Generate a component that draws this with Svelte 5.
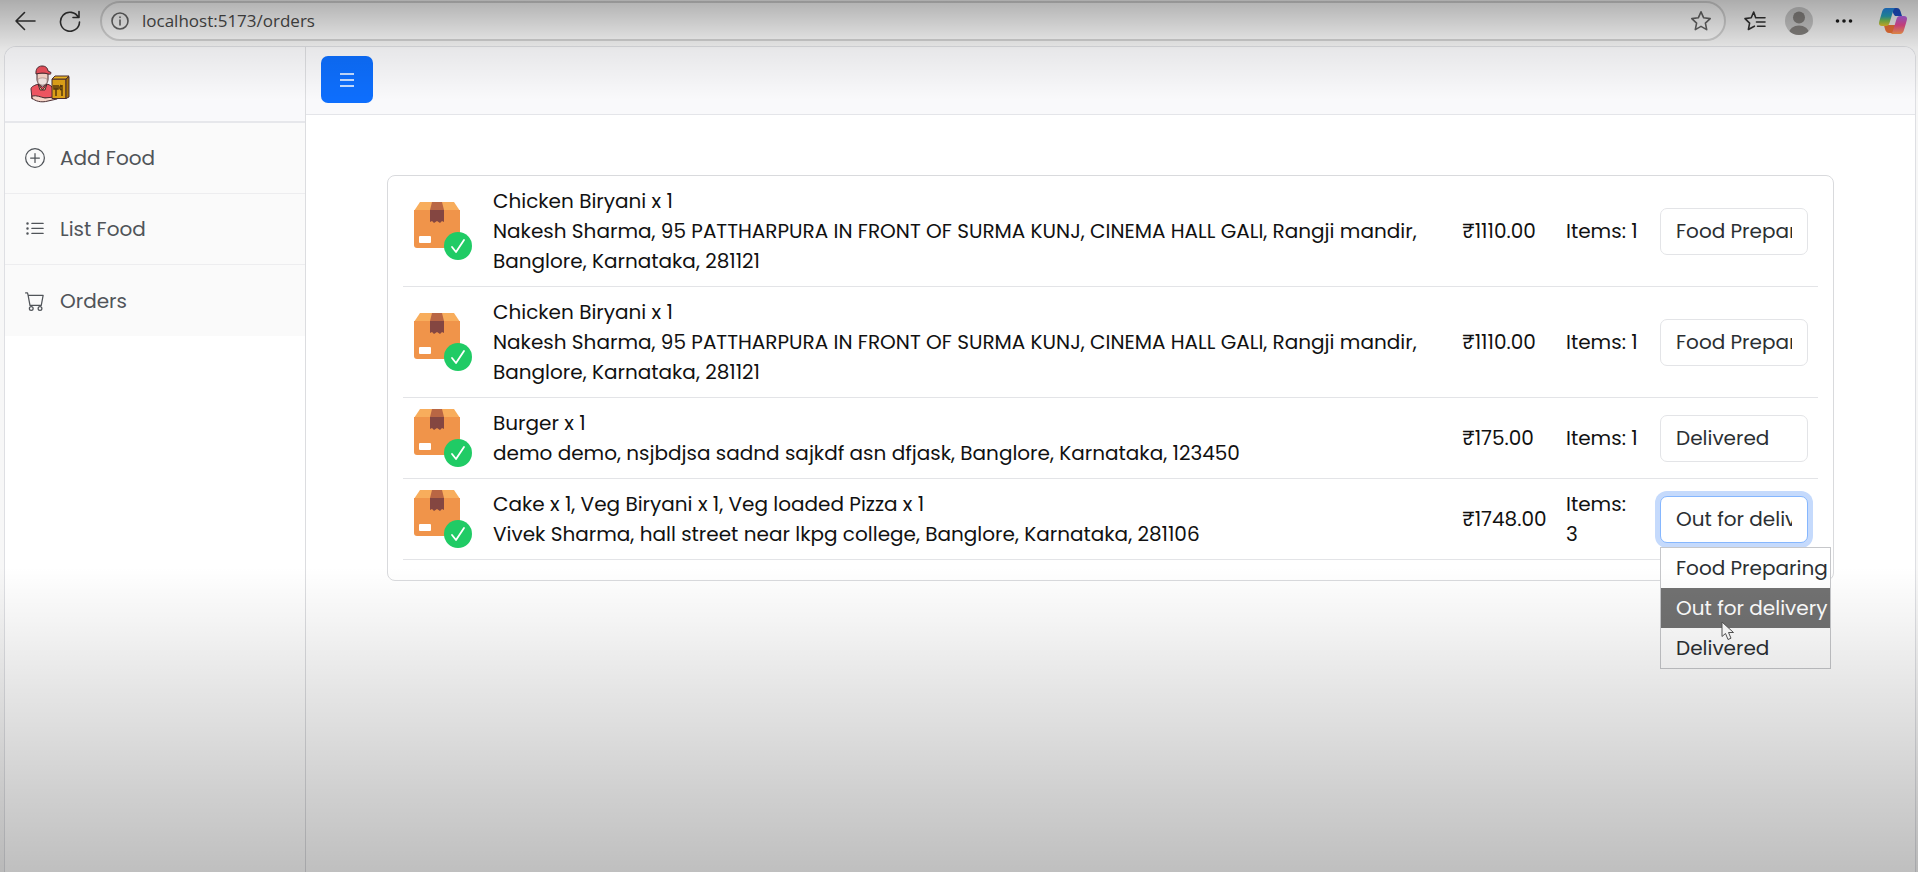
<script>
  const statuses = ['Food Preparing', 'Out for delivery', 'Delivered'];

  const links = [
    { label: 'Add Food', icon: 'add' },
    { label: 'List Food', icon: 'list' },
    { label: 'Orders', icon: 'cart' }
  ];

  const longAddress =
    'Nakesh Sharma, 95 PATTHARPURA IN FRONT OF SURMA KUNJ, CINEMA HALL GALI, Rangji mandir, Banglore, Karnataka, 281121';

  let orders = $state([
    { items: 'Chicken Biryani x 1', address: longAddress, amount: '1110.00', count: 1, status: 'Food Preparing' },
    { items: 'Chicken Biryani x 1', address: longAddress, amount: '1110.00', count: 1, status: 'Food Preparing' },
    {
      items: 'Burger x 1',
      address: 'demo demo, nsjbdjsa sadnd sajkdf asn dfjask, Banglore, Karnataka, 123450',
      amount: '175.00',
      count: 1,
      status: 'Delivered'
    },
    {
      items: 'Cake x 1, Veg Biryani x 1, Veg loaded Pizza x 1',
      address: 'Vivek Sharma, hall street near lkpg college, Banglore, Karnataka, 281106',
      amount: '1748.00',
      count: 3,
      status: 'Out for delivery'
    }
  ]);

  let openRow = $state(3);

  function choose(index, status) {
    orders[index].status = status;
    openRow = -1;
  }
</script>

<div class="window">
  <header class="toolbar">
    <button class="tool back" aria-label="Back">
      <svg width="22" height="20" viewBox="0 0 22 20"><path d="M21 10H2M10.500 1.500 2 10l8.500 8.500" /></svg>
    </button>
    <button class="tool reload" aria-label="Reload">
      <svg width="22" height="22" viewBox="0 0 22 22"><path d="M19.500 7.500A9.500 9.500 0 1 0 20.500 12M20 1.500v6h-6" /></svg>
    </button>
    <div class="address">
      <svg class="info" width="18" height="18" viewBox="0 0 18 18"><circle cx="9" cy="9" r="8" /><path d="M9 8v5M9 5v.5" /></svg>
      <input aria-label="Address" value="localhost:5173/orders" />
      <button class="tool star" aria-label="Add to favourites">
        <svg width="22" height="22" viewBox="0 0 22 22"><path d="m11 1.800 2.700 6 6.500.8-4.800 4.500 1.300 6.500-5.700-3.200-5.700 3.200 1.300-6.500L1.800 8.600l6.500-.8Z" /></svg>
      </button>
    </div>
    <button class="tool favs" aria-label="Favourites">
      <svg width="22" height="22" viewBox="0 0 22 22"><path d="M13 7.800h-1.300L9.700 2 7.200 7.800l-6.200.8 4.600 4.500-1.200 6.400 5-2.800 1-.5M13.500 7.800H21M12.500 12H21M13.500 16.200H21" /></svg>
    </button>
    <button class="tool profile" aria-label="Profile">
      <svg width="28" height="28" viewBox="0 0 28 28">
        <defs><clipPath id="face"><circle cx="14" cy="14" r="14" /></clipPath></defs>
        <circle cx="14" cy="14" r="14" fill="#c9c9c9" stroke="none" />
        <g clip-path="url(#face)" fill="#85827f" stroke="none"><circle cx="14" cy="10.500" r="6" /><ellipse cx="14" cy="26" rx="10" ry="7.500" /></g>
      </svg>
    </button>
    <button class="tool more" aria-label="More">
      <svg width="18" height="6" viewBox="0 0 18 6"><g fill="#1c1c1c" stroke="none"><circle cx="2.500" cy="3" r="1.800" /><circle cx="9" cy="3" r="1.800" /><circle cx="15.500" cy="3" r="1.800" /></g></svg>
    </button>
    <button class="tool copilot" aria-label="Copilot">
      <svg width="28" height="26" viewBox="0 0 28 26">
        <defs>
          <linearGradient id="cool" x1="0" y1="0" x2="0" y2="1"><stop offset="0" stop-color="#2687ee" /><stop offset=".45" stop-color="#28a5bc" /><stop offset=".7" stop-color="#80c552" /><stop offset="1" stop-color="#edc72c" /></linearGradient>
          <linearGradient id="warm" x1="0" y1="0" x2="0" y2="1"><stop offset="0" stop-color="#b568ee" /><stop offset=".5" stop-color="#ee4b96" /><stop offset="1" stop-color="#ff9d50" /></linearGradient>
        </defs>
        <g stroke="none">
          <path fill="#1e50c8" d="M14 0h4c3 0 3.500 3 5 8h-7c-2-2-3-5-2-8Z" />
          <path fill="#f07338" d="M5 17c1 5 2 8 5 8h4l3-8Z" />
          <path fill="url(#cool)" d="M7 0h10c-2 0-2.600 2-3.500 5l-3 10c-.7 2-1.500 3-3.500 3H3c-3 0-3.500-2-2.600-5L3 4C3.800 1.500 5 0 7 0Z" />
          <path fill="url(#warm)" d="M21 26H11c2 0 2.600-2 3.500-5l3-10c.7-2 1.500-3 3.500-3h4c3 0 3.500 2 2.600 5L25 22c-.8 2.500-2 4-4 4Z" />
        </g>
      </svg>
    </button>
  </header>

  <div class="page">
    <aside class="sidebar">
      <div class="brand">
        <svg width="40" height="38" viewBox="0 0 40 38" role="img" aria-label="Food delivery">
          <g stroke="#4a2d31" stroke-width="1" stroke-linejoin="round">
            <path fill="#f6d5c8" d="M7 8v6c0 4 2.500 6 5.500 6s5.500-2 5.500-6V8Z" />
            <path fill="#f3e6e2" stroke="#ad8f89" stroke-width=".7" d="M8 14c2-1.500 7-1.500 9 0v3c-1 4-8 4-9 0Z" />
            <path fill="#e94f5b" d="M6 9c-.5-5 2-8 6-8s5.500 2 6 5l3 1.500c.5 1.500-1 2-3 1.500-4-1.500-8-1-12 0Z" />
            <path fill="#ef5661" d="M1 24c0-2 2-3 7-5l4.500 3 4.500-3c3 1 5 2 6 5v9H5l-3 1Z" />
            <path fill="#f4d091" d="m8 19 4.500 6 4.500-6-2 6h-5Z" />
            <path fill="#f6d5c8" d="M2 31c5-1 8 1 13 2l9-1c3 0 5 1 3 2l-9 2c-7 2-13 0-16-3Z" />
            <path fill="#dda018" d="M22 14h14v19.500H22Z" />
            <path fill="#a87508" d="m36 14 3-2.500V32l-3 1.500Z" />
            <path fill="#f0b822" d="m22 14 3-3h14l-3 3Z" />
          </g>
          <path d="M26 20v11M24 20v4h4v-4M32 20v11M31 20c-2 3-1 5 1 5" fill="none" stroke="#59390b" stroke-width="1.500" />
        </svg>
      </div>
      <nav class="links">
        {#each links as link}
          <a href="#{link.icon}">
            <svg width="20" height="20" viewBox="0 0 16 16" fill="currentColor">
              {#if link.icon === 'add'}
                <path d="M8 15A7 7 0 1 1 8 1a7 7 0 0 1 0 14m0 1A8 8 0 1 0 8 0a8 8 0 0 0 0 16" />
                <path d="M8 4a.5.5 0 0 1 .5.5v3h3a.5.5 0 0 1 0 1h-3v3a.5.5 0 0 1-1 0v-3h-3a.5.5 0 0 1 0-1h3v-3A.5.5 0 0 1 8 4" />
              {:else if link.icon === 'list'}
                <path fill-rule="evenodd" d="M5 11.500a.5.5 0 0 1 .5-.5h9a.5.5 0 0 1 0 1h-9a.5.5 0 0 1-.5-.5m0-4a.5.5 0 0 1 .5-.5h9a.5.5 0 0 1 0 1h-9a.5.5 0 0 1-.5-.5m0-4a.5.5 0 0 1 .5-.5h9a.5.5 0 0 1 0 1h-9a.5.5 0 0 1-.5-.5m-3 1a1 1 0 1 0 0-2 1 1 0 0 0 0 2m0 4a1 1 0 1 0 0-2 1 1 0 0 0 0 2m0 4a1 1 0 1 0 0-2 1 1 0 0 0 0 2" />
              {:else}
                <path d="M.5 1a.5.5 0 0 0 0 1h1.110l.4 1.607 1.480 7.985A.5.5 0 0 0 4 12h1a2 2 0 1 0 0 4 2 2 0 0 0 0-4h7a2 2 0 1 0 0 4 2 2 0 0 0 0-4h1a.5.5 0 0 0 .49-.408l1.500-8A.5.5 0 0 0 14.500 3H2.890l-.405-1.621A.5.5 0 0 0 2 1zm2.600 3h10.800l-1.300 7H4.400zM5 13a1 1 0 1 1 0 2 1 1 0 0 1 0-2m7 0a1 1 0 1 1 0 2 1 1 0 0 1 0-2" />
              {/if}
            </svg>
            {link.label}
          </a>
        {/each}
      </nav>
    </aside>

    <div class="content">
      <div class="topbar">
        <button class="menu" aria-label="Toggle menu">
          <svg width="16" height="16" viewBox="0 0 16 16"><path d="M1 2h14M1 8h14M1 14h14" /></svg>
        </button>
      </div>

      <main>
        <section class="card">
          <table>
            <colgroup><col class="c-icon" /><col /><col class="c-amount" /><col class="c-count" /><col class="c-status" /></colgroup>
            <tbody>
              {#each orders as order, index}
                <tr>
                  <td>
                    <svg class="parcel" width="60" height="60" viewBox="0 0 60 60" aria-hidden="true">
                      <path fill="#f8ad5c" d="M7 1h34l6 9H1Z" />
                      <path fill="#f0944a" d="M1 9h46v35a3 3 0 0 1-3 3H4a3 3 0 0 1-3-3Z" />
                      <path fill="#b96644" d="M19 1h10l2 8H17Z" />
                      <path fill="#844641" d="M17 9h14v12l-2-1-2 2-3-2-3 2-2-2-2 1Z" />
                      <rect x="6" y="35" width="12" height="7" rx="1" fill="#fff" />
                      <circle cx="45" cy="45" r="14" fill="#20cb65" />
                      <path d="m39 46 4 5 8-12" fill="none" stroke="#fff" stroke-width="1.800" stroke-linecap="round" stroke-linejoin="round" />
                    </svg>
                  </td>
                  <td>
                    <div>{order.items}</div>
                    <div>{order.address}</div>
                  </td>
                  <td class="amount">₹{order.amount}</td>
                  <td class="count" class:narrow={order.count > 1}>Items: <span>{order.count}</span></td>
                  <td>
                    <div class="status">
                      <select class:open={openRow === index} bind:value={order.status} aria-label="Status of order {index + 1}">
                        {#each statuses as status}<option>{status}</option>{/each}
                      </select>
                      {#if openRow === index}
                        <div class="options" role="listbox" aria-label="Order status">
                          {#each statuses as status}
                            <button role="option" aria-selected={status === order.status} onclick={() => choose(index, status)}>{status}</button>
                          {/each}
                          <svg class="pointer" width="14" height="20" viewBox="0 0 14 20" aria-hidden="true"><path d="M1 1v14.500l3.500-3 2.500 6 3-1.300-2.500-5.700h5Z" /></svg>
                        </div>
                      {/if}
                    </div>
                  </td>
                </tr>
              {/each}
            </tbody>
          </table>
        </section>
      </main>
    </div>
  </div>
  <div class="shade"></div>
</div>

<style>
  :global(body) {
    margin: 0;
  }
  .window,
  .window :global(*) {
    box-sizing: border-box;
  }
  .window {
    position: relative;
    display: flex;
    flex-direction: column;
    min-height: 100vh;
    background: #f7f7f7;
    color: #111;
    font: 20px/30px Poppins, Inter, sans-serif;
  }
  .shade {
    position: absolute;
    inset: 0;
    pointer-events: none;
    z-index: 5;
    background:
      linear-gradient(rgba(0, 0, 0, 0.3), rgba(0, 0, 0, 0.07) 50px, transparent 100px),
      linear-gradient(transparent 65%, rgba(0, 0, 0, 0.25));
  }
  button {
    font: inherit;
    border: 0;
    padding: 0;
    background: none;
  }

  .toolbar {
    display: flex;
    align-items: center;
    height: 42px;
    padding: 0 11px 0 14px;
  }
  .tool {
    display: flex;
    flex: none;
  }
  .tool svg,
  .info {
    fill: none;
    stroke: #333;
    stroke-width: 1.6;
    stroke-linecap: round;
    stroke-linejoin: round;
  }
  .reload {
    margin-left: 23px;
  }
  .address {
    flex: 1;
    display: flex;
    align-items: center;
    height: 40px;
    margin: 0 18px 0 19px;
    padding: 0 12px 0 9px;
    border: 2px solid #d4d4d4;
    border-radius: 20px;
    background: #fdfdfd;
  }
  .address .info,
  .star svg {
    stroke: #666;
  }
  .address input {
    flex: 1;
    min-width: 0;
    margin: 0 0 0 13px;
    padding: 0;
    border: 0;
    outline: 0;
    background: none;
    color: #4a4a4a;
    font: 17px/24px 'Segoe UI', 'Open Sans', sans-serif;
  }
  .profile {
    margin-left: 19px;
  }
  .more {
    margin-left: 22px;
  }
  .copilot {
    margin-left: 26px;
  }

  .page {
    flex: 1;
    display: flex;
    margin: 4px 2px 0 4px;
    border: 1px solid #dedfe3;
    border-bottom: 0;
    border-radius: 12px 12px 0 0;
    background: #fff;
    overflow: hidden;
  }
  .sidebar {
    flex: none;
    width: 301px;
    border-right: 1px solid #dcdde0;
  }
  .brand {
    display: flex;
    align-items: center;
    height: 76px;
    padding-left: 25px;
    border-bottom: 2px solid #e6e7eb;
    background: #f9f9fb;
  }
  .links a {
    display: flex;
    align-items: center;
    gap: 15px;
    height: 71px;
    padding-left: 20px;
    border-bottom: 1px solid #ededef;
    background: #fafafa;
    color: #505459;
    text-decoration: none;
  }
  .links a:last-child {
    border-bottom: 0;
  }
  .content {
    flex: 1;
    min-width: 0;
  }
  .topbar {
    display: flex;
    align-items: center;
    height: 68px;
    padding: 0 15px 2px;
    border-bottom: 1px solid #e4e5e9;
    background: #f9f9fb;
  }
  .menu {
    display: flex;
    align-items: center;
    justify-content: center;
    width: 52px;
    height: 47px;
    border-radius: 7px;
    background: #0d6efd;
  }
  .menu path {
    stroke: #fff;
    stroke-width: 1.5;
  }

  main {
    padding: 60px 81px;
  }
  .card {
    padding: 0 15px 20px;
    border: 1px solid #d9dadd;
    border-radius: 8px;
    background: #fff;
  }
  table {
    width: 100%;
    table-layout: fixed;
    border-collapse: collapse;
  }
  .c-icon {
    width: 80px;
  }
  .c-amount {
    width: 104px;
  }
  .c-count {
    width: 94px;
  }
  .c-status {
    width: 168px;
  }
  td {
    padding: 10px;
    border-bottom: 1px solid #e3e4e7;
    vertical-align: middle;
  }
  .parcel {
    display: block;
  }
  .amount,
  .count {
    white-space: nowrap;
  }
  .narrow span {
    display: block;
  }
  .status {
    position: relative;
  }
  select {
    display: block;
    width: 100%;
    height: 47px;
    padding: 7px 15px;
    border: 1px solid #e3e4e7;
    border-radius: 7px;
    outline: 0;
    background: #fff;
    color: #2b2f33;
    font: inherit;
    appearance: none;
  }
  select.open {
    border-color: #86b7fe;
    box-shadow: 0 0 0 5px #c5dafc;
  }
  .options {
    position: absolute;
    z-index: 2;
    top: 51px;
    left: 0;
    border: 1px solid #c6c7ca;
    background: #fff;
  }
  .options button {
    display: block;
    width: 100%;
    height: 40px;
    padding: 0 2px 0 15px;
    color: #2b2f33;
    text-align: left;
    white-space: nowrap;
  }
  .options button[aria-selected='true'] {
    background: #727272;
    color: #fff;
  }
  .pointer {
    position: absolute;
    top: 73px;
    left: 60px;
    fill: #fff;
    stroke: #555;
  }
</style>
